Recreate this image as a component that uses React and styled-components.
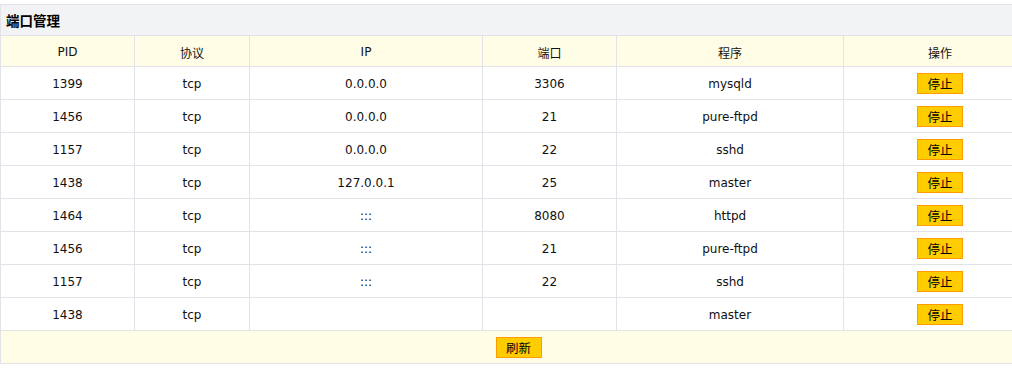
import React from "react";
import styled, { createGlobalStyle } from "styled-components";

const Global = createGlobalStyle`
  html, body { margin: 0; padding: 0; overflow: hidden; background: #fff; }
  body { font-family: "DejaVu Sans", "Noto Sans CJK SC", sans-serif; font-size: 12px; color: #111; }
`;

const Page = styled.div`
  padding-top: 4px;
  width: 1037px;
`;

const Panel = styled.div`
  border: 1px solid #e1e3e8;
  width: 1035px;
`;

const TitleBar = styled.div`
  height: 30px;
  background: #f2f3f5;
  border-bottom: 1px solid #e1e3e8;
  display: flex;
  align-items: center;
  padding-left: 5px;
  font-family: "Noto Sans CJK SC", sans-serif;
  font-weight: bold;
  font-size: 13.5px;
  color: #000;
`;

const Grid = styled.div`
  display: grid;
  grid-template-columns: 134px 115px 233px 134px 227px 192px;
`;

const Cell = styled.div`
  box-sizing: border-box;
  height: ${(p) => (p.$head ? 31 : 33)}px;
  display: flex;
  align-items: center;
  justify-content: center;
  padding-top: ${(p) => (p.$btn ? 0 : 2)}px;
  border-bottom: 1px solid #e1e3e8;
  border-right: ${(p) => (p.$last ? "none" : "1px solid #e1e3e8")};
  background: ${(p) => (p.$head ? "#fffde6" : "#fff")};
  color: #111;
`;

const Footer = styled.div`
  height: 32px;
  background: #fffde6;
  display: flex;
  align-items: center;
  justify-content: center;
`;

const Btn = styled.button`
  width: 46px;
  height: 21px;
  padding: 0;
  margin: 0;
  background: #ffcc00;
  border: 1px solid #ff9c00;
  font-family: "Noto Sans CJK SC", sans-serif;
  font-size: 12.5px;
  line-height: 19px;
  color: #000;
  cursor: pointer;
`;

const headers = ["PID", "协议", "IP", "端口", "程序", "操作"];
const rows = [
  ["1399", "tcp", "0.0.0.0", "3306", "mysqld"],
  ["1456", "tcp", "0.0.0.0", "21", "pure-ftpd"],
  ["1157", "tcp", "0.0.0.0", "22", "sshd"],
  ["1438", "tcp", "127.0.0.1", "25", "master"],
  ["1464", "tcp", ":::", "8080", "httpd"],
  ["1456", "tcp", ":::", "21", "pure-ftpd"],
  ["1157", "tcp", ":::", "22", "sshd"],
  ["1438", "tcp", "", "", "master"],
];

export default function App() {
  return (
    <>
      <Global />
      <Page>
        <Panel>
          <TitleBar>端口管理</TitleBar>
          <Grid>
            {headers.map((h, i) => (
              <Cell key={h} $head $last={i === 5}>
                {h}
              </Cell>
            ))}
            {rows.map((r, ri) => (
              <React.Fragment key={ri}>
                {r.map((v, ci) => (
                  <Cell key={ci}>{v}</Cell>
                ))}
                <Cell $last $btn>
                  <Btn>停止</Btn>
                </Cell>
              </React.Fragment>
            ))}
          </Grid>
          <Footer>
            <Btn>刷新</Btn>
          </Footer>
        </Panel>
      </Page>
    </>
  );
}
